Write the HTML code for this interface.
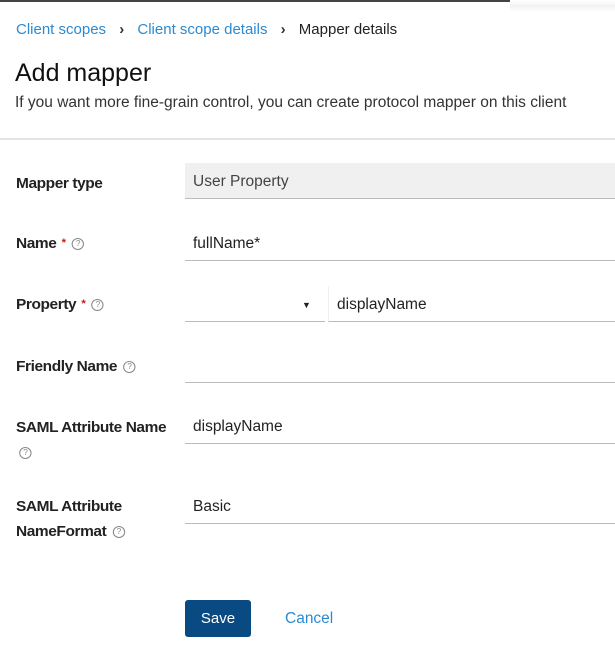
<!DOCTYPE html>
<html><head><meta charset="utf-8"><style>
body{margin:0;width:615px;height:649px;overflow:hidden;background:#fff;font-family:"Liberation Sans",sans-serif;color:#151515;position:relative}
.a{position:absolute;white-space:nowrap}
.lbl{font-size:15px;font-weight:bold;color:#222;letter-spacing:-0.4px;transform:scaleX(1.03);transform-origin:left}
.in{position:absolute;left:185px;right:0;height:36px;border-bottom:1.5px solid #bbb;box-sizing:border-box;font-size:15.5px;padding:0 8px;line-height:38px;color:#222}
.q{display:inline-block;width:10px;height:10px;border:1px solid #888;border-radius:50%;font-size:8px;line-height:10px;text-align:center;color:#888;font-weight:normal;vertical-align:middle;margin-left:6px}
.r{color:#c9190b;font-size:11px;vertical-align:2px;margin-left:5px}
</style></head><body>
<div class="a" style="left:0;top:0;width:510px;height:2px;background:#444"></div>
<div class="a" style="left:510px;top:0;width:105px;height:12px;background:linear-gradient(#fff,#f2f2f2,#fff)"></div>
<div class="a" style="left:16px;top:21px;font-size:15px;color:#2b8ad1">Client scopes <span style="color:#333;margin:0 9px;font-weight:bold">›</span> Client scope details <span style="color:#333;margin:0 9px;font-weight:bold">›</span> <span style="color:#222">Mapper details</span></div>
<div class="a" style="left:15px;top:59px;font-size:25px;color:#111">Add mapper</div>
<div class="a" style="left:15px;top:94px;font-size:15.5px;color:#333">If you want more fine-grain control, you can create protocol mapper on this client</div>
<div class="a" style="left:0;top:138px;width:615px;height:2px;background:#e4e4e4"></div>

<div class="a lbl" style="left:16px;top:175px">Mapper type</div>
<div class="in" style="top:163px;background:#f0f0f0;color:#444">User Property</div>

<div class="a lbl" style="left:16px;top:235px">Name<span class="r">*</span><span class="q">?</span></div>
<div class="in" style="top:225px">fullName*</div>

<div class="a lbl" style="left:16px;top:296px">Property<span class="r">*</span><span class="q">?</span></div>
<div class="in" style="top:286px;right:290px;width:140px"><span style="position:absolute;left:117px;top:0;font-size:9px">▼</span></div>
<div class="in" style="top:286px;left:328px;border-left:1px solid #f0f0f0">displayName</div>

<div class="a lbl" style="left:16px;top:358px">Friendly Name<span class="q">?</span></div>
<div class="in" style="top:347px"></div>

<div class="a lbl" style="left:16px;top:419px">SAML Attribute Name</div>
<div class="a lbl" style="left:13px;top:444px"><span class="q">?</span></div>
<div class="in" style="top:408px">displayName</div>

<div class="a lbl" style="left:16px;top:498px">SAML Attribute</div>
<div class="a lbl" style="left:16px;top:523px">NameFormat<span class="q">?</span></div>
<div class="in" style="top:488px;height:36px">Basic</div>

<div class="a" style="left:185px;top:600px;width:66px;height:37px;background:#0a4a82;border-radius:3px;color:#fff;font-size:15px;text-align:center;line-height:37px">Save</div>
<div class="a" style="left:285px;top:610px;font-size:15.5px;color:#2b8ad1">Cancel</div>
</body></html>
